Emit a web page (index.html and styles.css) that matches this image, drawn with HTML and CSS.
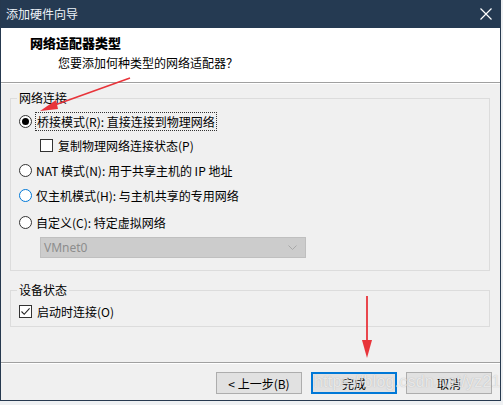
FILE: index.html
```html
<!DOCTYPE html>
<html>
<head>
<meta charset="utf-8">
<link rel="stylesheet" href="styles.css">
</head>
<body>
<div class="window">
  <div class="titlebar">
    <span class="title">添加硬件向导</span>
    <svg class="close" width="12" height="12" viewBox="0 0 12 12"><path d="M0.5 0.5 L11.5 11.5 M11.5 0.5 L0.5 11.5" stroke="#ffffff" stroke-width="1.2"/></svg>
  </div>
  <div class="header">
    <div class="h-title">网络适配器类型</div>
    <div class="h-sub">您要添加何种类型的网络适配器？</div>
  </div>
  <div class="body">
    <fieldset class="group g1">
      <legend>网络连接</legend>
      <div class="row r-bridge"><span class="radio checked"></span><span class="label focus">桥接模式(R): 直接连接到物理网络</span></div>
      <div class="row r-sub"><span class="check"></span><span class="label">复制物理网络连接状态(P)</span></div>
      <div class="row"><span class="radio"></span><span class="label">NAT 模式(N): 用于共享主机的 IP 地址</span></div>
      <div class="row"><span class="radio hover"></span><span class="label">仅主机模式(H): 与主机共享的专用网络</span></div>
      <div class="row r-custom"><span class="radio"></span><span class="label">自定义(C): 特定虚拟网络</span></div>
      <div class="select"><span>VMnet0</span><svg width="9" height="5" viewBox="0 0 9 5"><path d="M0.5 0.5 L4.5 4.5 L8.5 0.5" fill="none" stroke="#a8a8a8" stroke-width="1"/></svg></div>
    </fieldset>
    <fieldset class="group g2">
      <legend>设备状态</legend>
      <div class="row"><span class="check checked"><svg width="11" height="11" viewBox="0 0 11 11"><path d="M1.5 5.5 L4.2 8.3 L9.6 2.3" fill="none" stroke="#222" stroke-width="1.1"/></svg></span><span class="label">启动时连接(O)</span></div>
    </fieldset>
  </div>
  <div class="footer">
    <button class="btn">&lt; 上一步(B)</button>
    <button class="btn primary">完成</button>
    <button class="btn">取消</button>
  </div>
  <div class="watermark">https://blog.csdn.net/yz21</div>
  <svg class="arrows" width="503" height="405" viewBox="0 0 503 405">
    <path d="M130 78 L52 106" stroke="#e8343a" stroke-width="1.6" fill="none"/>
    <path d="M40 111 L56 100 L58 109 Z" fill="#e8343a"/>
    <path d="M367 296 L367 340" stroke="#e8343a" stroke-width="1.8" fill="none"/>
    <path d="M362 340 L372 340 L367 358 Z" fill="#e8343a"/>
  </svg>
</div>
</body>
</html>
```
FILE: styles.css
```css
* { box-sizing: border-box; }
html, body { margin: 0; padding: 0; }
body {
  width: 503px; height: 405px;
  background: #eef0f2;
  font-family: "Noto Sans CJK SC", "Noto Sans", sans-serif;
  font-size: 12px;
  color: #000;
  overflow: hidden;
}
.window {
  position: relative;
  width: 501px; height: 401px;
  border-left: 1px solid #26394f;
  border-right: 1px solid #26394f;
  border-bottom: 1px solid #26394f;
  background: #f0f0f0;
  display: flex; flex-direction: column;
}
.titlebar {
  height: 28px;
  background: #253a52;
  display: flex; align-items: center; justify-content: space-between;
  padding: 0 8px 0 5px;
  color: #eef3f8;
  flex: none;
}
.title { font-size: 12px; line-height: 16px; }
.header {
  height: 55px;
  background: #fff;
  border-bottom: 1px solid #a0a0a0;
  box-shadow: 0 1px 0 #fff;
  padding: 6px 0 0 29px;
  flex: none;
}
.h-title { font-weight: 900; font-size: 13px; line-height: 18px; height: 18px; }
.h-sub { padding-left: 28px; line-height: 17px; margin-top: 2px; }
.body { flex: 1; padding: 7px 10px 0 9px; display: flex; flex-direction: column; gap: 11px; }
.group {
  margin: 0; padding: 0 0 0 8px;
  border: 1px solid #dcdcdc;
  min-width: 0;
}
.group legend { padding: 0 2px; margin-left: -2px; line-height: 16px; color: #000; }
.g1 { height: 181px; padding-top: 3px; }
.g2 { height: 45px; padding-top: 1px; }
.row { display: flex; align-items: center; height: 25px; }
.r-bridge { height: 24px; }
.r-custom { height: 28px; }
.r-sub { padding-left: 21px; }
.radio {
  width: 13px; height: 13px; border-radius: 50%;
  border: 1px solid #333; background: #fff;
  display: flex; align-items: center; justify-content: center;
  margin-right: 4px; flex: none;
}
.radio.checked::after { content: ""; width: 7px; height: 7px; border-radius: 50%; background: #000; }
.radio.hover { border-color: #0078d7; }
.check {
  width: 13px; height: 13px; border: 1px solid #333; background: #fff;
  margin-right: 5px; flex: none;
  display: flex; align-items: center; justify-content: center;
}
.label { line-height: 17px; white-space: nowrap; }
.label.focus { outline: 1px dotted #333; outline-offset: 0; padding: 0 1px; }
.select {
  margin: 1px 0 0 21px;
  width: 266px; height: 21px;
  background: #cccccc;
  border: 1px solid #bfbfbf;
  display: flex; align-items: center; justify-content: space-between;
  padding: 0 8px 0 3px;
  color: #8d8d8d;
  font-family: "Noto Sans", sans-serif;
}
.footer {
  height: 38px; flex: none;
  border-top: 1px solid #a0a0a0;
  box-shadow: inset 0 1px 0 #fff;
  display: flex; justify-content: flex-end; align-items: flex-start;
  gap: 9px;
  padding: 9px 8px 0 0;
}
.btn {
  width: 86px; height: 22px;
  background: #e1e1e1;
  border: 1px solid #adadad;
  font-family: "Noto Sans CJK SC", sans-serif;
  font-size: 12px; color: #000;
  padding: 0; margin: 0;
}
.btn.primary { border: 2px solid #0078d7; }
.watermark {
  position: absolute; left: 313px; top: 373px;
  font-family: "Liberation Sans", sans-serif;
  font-size: 16px;
  color: rgba(255,255,255,0.7);
  text-shadow: 0 0 1px rgba(120,120,120,0.5);
  letter-spacing: 0.2px;
  pointer-events: none;
}
.arrows { position: absolute; left: -1px; top: 0; pointer-events: none; }
```
